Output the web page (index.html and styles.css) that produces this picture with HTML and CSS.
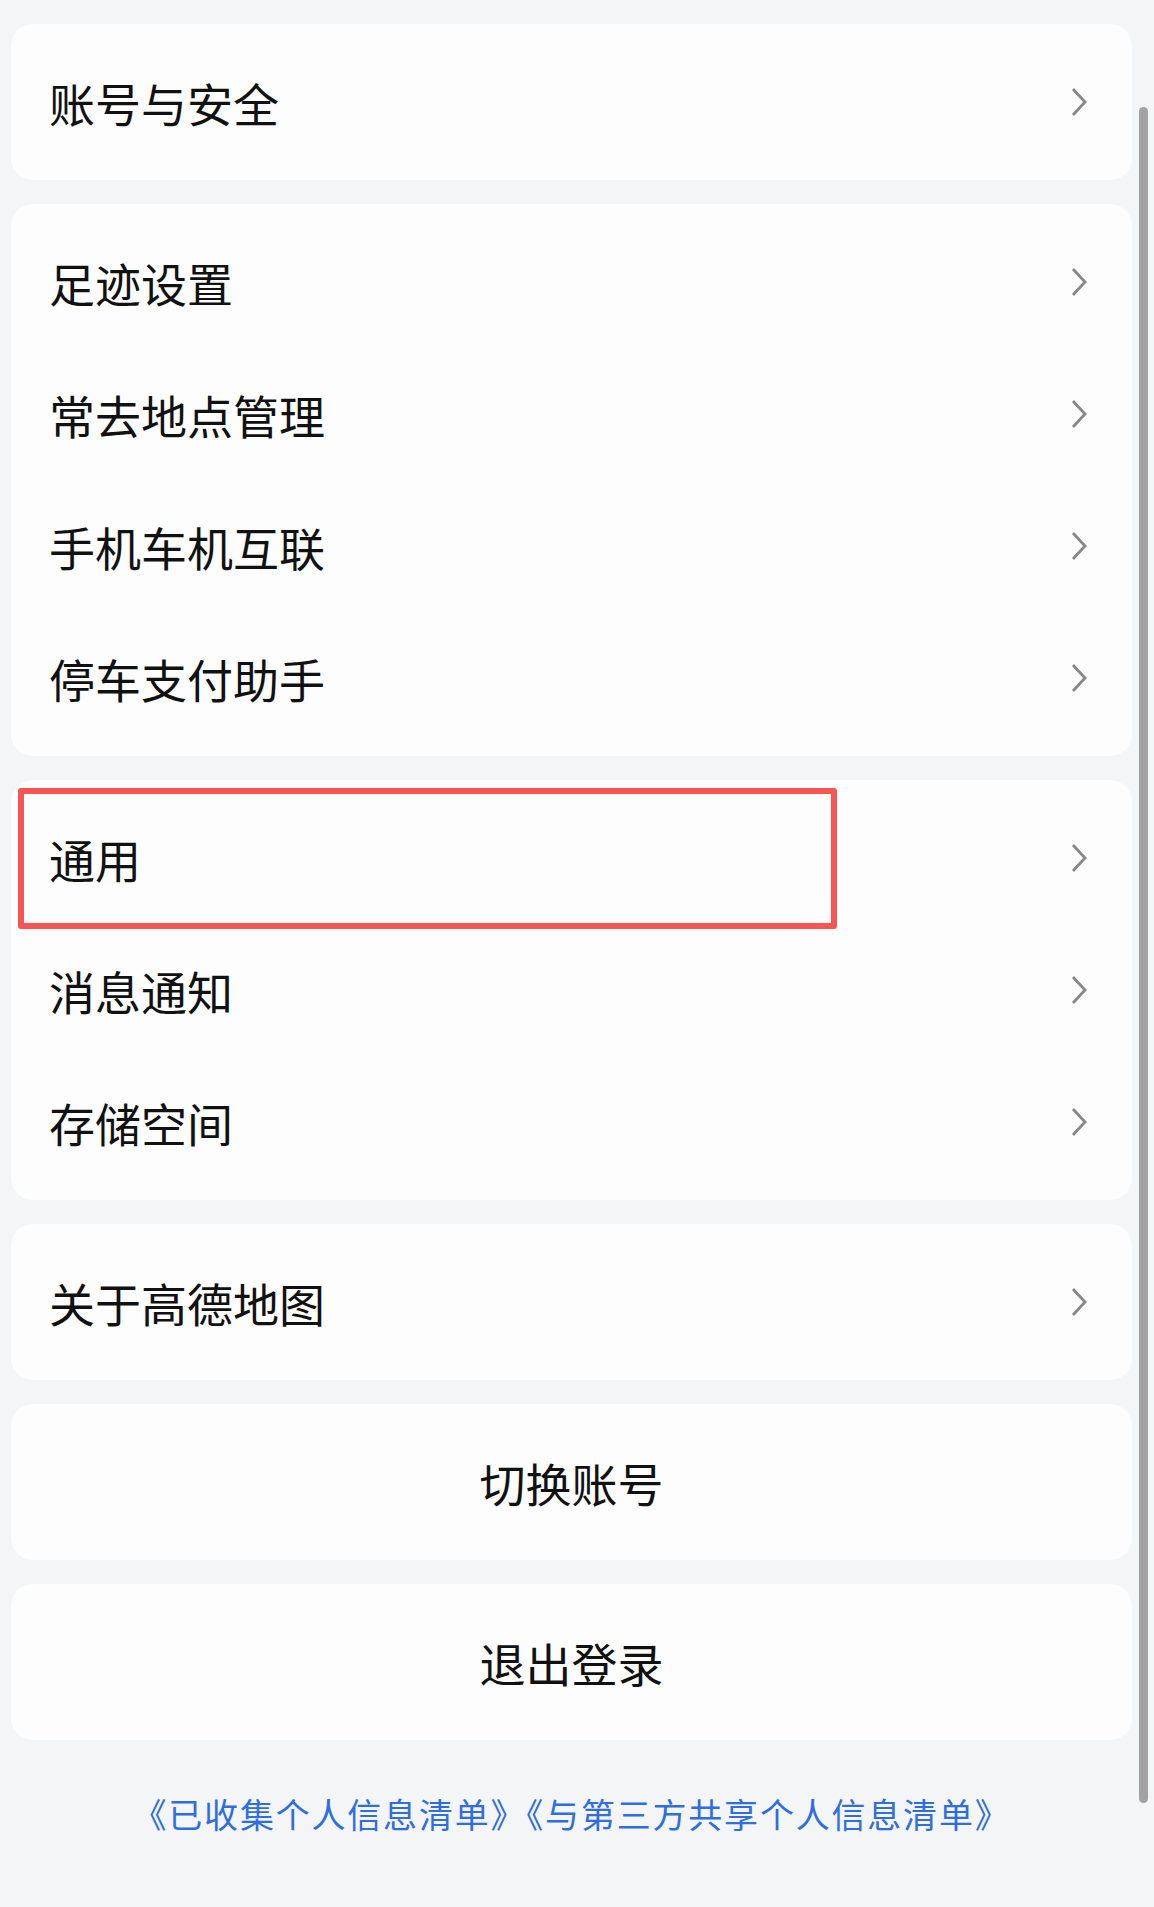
FILE: index.html
```html
<!DOCTYPE html>
<html lang="zh-CN">
<head>
    <meta charset="UTF-8">
    <meta name="viewport" content="width=device-width, initial-scale=1.0">
    <title>设置</title>
    <link rel="stylesheet" href="styles.css">
</head>
<body>
    <main class="settings">
        <section class="card">
            <div class="row"><span>账号与安全</span><svg class="chevron" viewBox="0 0 16 30"><path d="M2 2 L14 15 L2 28"/></svg></div>
        </section>

        <section class="card">
            <div class="row"><span>足迹设置</span><svg class="chevron" viewBox="0 0 16 30"><path d="M2 2 L14 15 L2 28"/></svg></div>
            <div class="row"><span>常去地点管理</span><svg class="chevron" viewBox="0 0 16 30"><path d="M2 2 L14 15 L2 28"/></svg></div>
            <div class="row"><span>手机车机互联</span><svg class="chevron" viewBox="0 0 16 30"><path d="M2 2 L14 15 L2 28"/></svg></div>
            <div class="row"><span>停车支付助手</span><svg class="chevron" viewBox="0 0 16 30"><path d="M2 2 L14 15 L2 28"/></svg></div>
        </section>

        <section class="card">
            <div class="row highlighted"><span>通用</span><svg class="chevron" viewBox="0 0 16 30"><path d="M2 2 L14 15 L2 28"/></svg><div class="mark"></div></div>
            <div class="row"><span>消息通知</span><svg class="chevron" viewBox="0 0 16 30"><path d="M2 2 L14 15 L2 28"/></svg></div>
            <div class="row"><span>存储空间</span><svg class="chevron" viewBox="0 0 16 30"><path d="M2 2 L14 15 L2 28"/></svg></div>
        </section>

        <section class="card">
            <div class="row"><span>关于高德地图</span><svg class="chevron" viewBox="0 0 16 30"><path d="M2 2 L14 15 L2 28"/></svg></div>
        </section>

        <section class="card">
            <div class="row center">切换账号</div>
        </section>

        <section class="card">
            <div class="row center">退出登录</div>
        </section>

        <p class="links"><a href="#">《已收集个人信息清单》</a><a href="#">《与第三方共享个人信息清单》</a></p>
    </main>

    <div class="scrollbar"></div>
</body>
</html>
```

FILE: styles.css
```css
body {
    margin: 0;
    padding: 0;
    background: #f4f5f7;
    font-family: "Noto Sans CJK SC", "Noto Sans", sans-serif;
    color: #111;
}

.settings {
    display: flex;
    flex-direction: column;
    gap: 24px;
    padding: 24px 22px 0 11px;
}

.card {
    background: #fdfdfe;
    border-radius: 22px;
    padding: 12px 0;
}

.row {
    position: relative;
    height: 132px;
    display: flex;
    align-items: center;
    justify-content: space-between;
    padding: 0 45px 0 38px;
    font-size: 46px;
}

.row.center {
    justify-content: center;
    padding: 0;
}

.chevron {
    width: 16px;
    height: 30px;
    fill: none;
    stroke: #888;
    stroke-width: 2.8;
}

.mark {
    position: absolute;
    top: -4px;
    left: 7px;
    width: 819px;
    height: 141px;
    box-sizing: border-box;
    border: 6px solid #f75454;
    border-radius: 3px;
}

.links {
    margin: 26px 0 0;
    text-align: center;
    font-size: 34px;
    letter-spacing: 1.8px;
    line-height: 48px;
}

.links a {
    color: #2f6de0;
    text-decoration: none;
}

.scrollbar {
    position: absolute;
    top: 107px;
    left: 1139px;
    width: 9px;
    height: 1696px;
    border-radius: 5px;
    background: #a2a2a4;
}
```
